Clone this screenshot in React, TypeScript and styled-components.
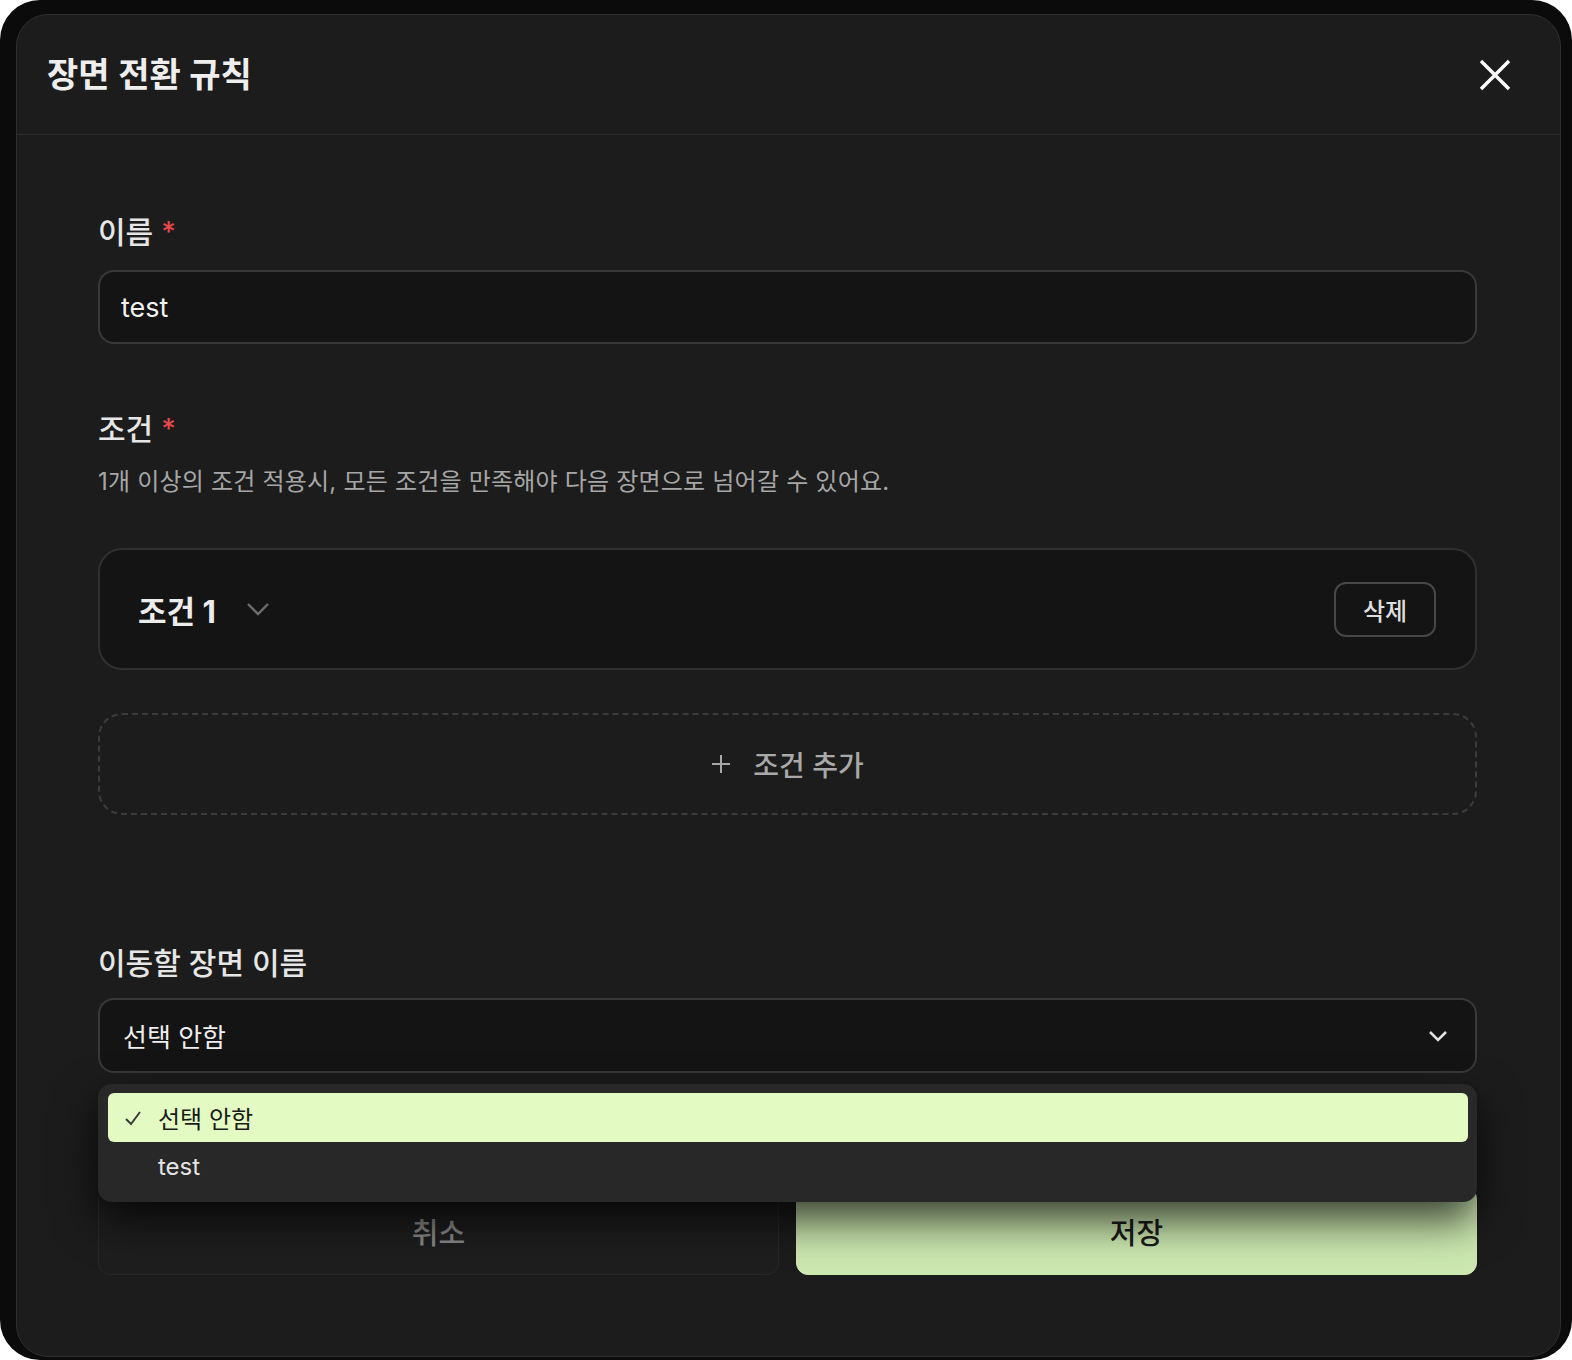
import styled, { createGlobalStyle } from "styled-components";

const GlobalStyle = createGlobalStyle`
  html, body {
    margin: 0;
    padding: 0;
    background: #ffffff;
  }
  body {
    font-family: Inter, "Noto Sans CJK KR", sans-serif;
  }
  * {
    box-sizing: border-box;
  }
`;

// 바깥 검은 프레임
const Frame = styled.div`
  width: 1572px;
  height: 1360px;
  background: #0b0b0b;
  border-radius: 40px;
  padding: 14px 11px 3px 16px;
  display: flex;
`;

const Modal = styled.div`
  flex: 1;
  background: #1c1c1c;
  border: 1px solid #2e2e2e;
  border-radius: 32px;
  display: flex;
  flex-direction: column;
  overflow: hidden;
`;

const Header = styled.div`
  height: 120px;
  flex-shrink: 0;
  border-bottom: 1px solid #2c2c2c;
  display: flex;
  align-items: center;
  justify-content: space-between;
  padding: 0 49px 0 30px;
`;

const Title = styled.h1`
  margin: 0;
  font-size: 34px;
  font-weight: 600;
  color: #eeeeee;
  line-height: 42px;
`;

const CloseButton = styled.button`
  width: 32px;
  height: 32px;
  padding: 0;
  border: none;
  background: transparent;
  cursor: pointer;
  display: flex;
`;

const Body = styled.div`
  flex: 1;
  padding: 78px 83px 0 81px;
  display: flex;
  flex-direction: column;
`;

const Label = styled.div<{ $mt?: number }>`
  margin-top: ${(p) => p.$mt ?? 0}px;
  font-size: 30px;
  font-weight: 500;
  line-height: 38px;
  color: #e6e6e6;
  display: flex;
  align-items: flex-start;
`;

const Required = styled.span`
  margin: 4px 0 0 8px;
  font-size: 28px;
  line-height: 30px;
  color: #e5484d;
`;

const TextInput = styled.input`
  margin-top: 19px;
  height: 74px;
  width: 100%;
  border: 2px solid #393939;
  border-radius: 16px;
  background: #141414;
  padding: 0 21px;
  font-family: inherit;
  font-size: 27px;
  color: #f2f2f2;
  outline: none;
`;

const Description = styled.p`
  margin: 18px 0 0;
  font-size: 24px;
  line-height: 32px;
  letter-spacing: 0.2px;
  color: #a6a6a6;
`;

const ConditionCard = styled.div`
  margin-top: 50px;
  height: 122px;
  border: 2px solid #303030;
  border-radius: 24px;
  background: #141414;
  display: flex;
  align-items: center;
  justify-content: space-between;
  padding: 0 39px 0 38px;
`;

const ConditionTitle = styled.div`
  display: flex;
  align-items: center;
  gap: 30px;
  font-size: 31px;
  font-weight: 700;
  color: #ececec;
`;

const DeleteButton = styled.button`
  width: 102px;
  height: 55px;
  border: 2px solid #474747;
  border-radius: 12px;
  background: transparent;
  font-family: inherit;
  font-size: 24px;
  font-weight: 500;
  color: #dedede;
  cursor: pointer;
`;

const AddButton = styled.button`
  margin-top: 43px;
  height: 102px;
  width: 100%;
  border: 2px dashed #3c3c3c;
  border-radius: 24px;
  background: transparent;
  font-family: inherit;
  font-size: 28px;
  font-weight: 500;
  color: #a9a9a9;
  display: flex;
  align-items: center;
  justify-content: center;
  gap: 22px;
  cursor: pointer;
`;

const SelectWrap = styled.div`
  position: relative;
  margin-top: 16px;
`;

const SelectBox = styled.div`
  height: 75px;
  border: 2px solid #393939;
  border-radius: 16px;
  background: #141414;
  padding: 0 27px 0 23px;
  display: flex;
  align-items: center;
  justify-content: space-between;
  font-size: 26px;
  color: #eeeeee;
`;

const Popup = styled.ul`
  position: absolute;
  top: calc(100% + 11px);
  left: 0;
  right: 0;
  margin: 0;
  padding: 9px 9px 11px 10px;
  list-style: none;
  background: #282828;
  border-radius: 14px;
  box-shadow: 0 18px 44px rgba(0, 0, 0, 0.75);
  z-index: 10;
`;

const Option = styled.li<{ $selected?: boolean }>`
  height: 49px;
  border-radius: 6px;
  display: flex;
  align-items: center;
  gap: 16px;
  padding-left: 16px;
  font-size: 24px;
  background: ${(p) => (p.$selected ? "#e3fbc3" : "transparent")};
  color: ${(p) => (p.$selected ? "#1b1b1b" : "#e4e4e4")};
`;

const CheckSlot = styled.span`
  width: 18px;
  height: 16px;
  display: flex;
`;

const Footer = styled.div`
  margin-top: 114px;
  display: grid;
  grid-template-columns: 1fr 1fr;
  gap: 17px;
`;

const FooterButton = styled.button<{ $primary?: boolean }>`
  height: 88px;
  border-radius: 12px;
  font-family: inherit;
  font-size: 29px;
  font-weight: 500;
  cursor: pointer;
  border: 1px solid ${(p) => (p.$primary ? "#cce8b0" : "#282828")};
  background: ${(p) => (p.$primary ? "#cce8b0" : "#1e1e1e")};
  color: ${(p) => (p.$primary ? "#1c1c1c" : "#8a8a8a")};
`;

function App() {
  return (
    <>
      <GlobalStyle />
      <Frame>
        <Modal>
          <Header>
            <Title>장면 전환 규칙</Title>
            <CloseButton aria-label="닫기">
              <svg width="32" height="32" viewBox="0 0 32 32">
                <path d="M2 2 L30 30 M30 2 L2 30" stroke="#ffffff" strokeWidth="3.4" />
              </svg>
            </CloseButton>
          </Header>

          <Body>
            <Label>
              이름<Required>*</Required>
            </Label>
            <TextInput defaultValue="test" />

            <Label $mt={66}>
              조건<Required>*</Required>
            </Label>
            <Description>
              1개 이상의 조건 적용시, 모든 조건을 만족해야 다음 장면으로 넘어갈 수 있어요.
            </Description>

            <ConditionCard>
              <ConditionTitle>
                조건 1
                <svg width="24" height="14" viewBox="0 0 24 14">
                  <polyline points="2,2 12,12 22,2" fill="none" stroke="#6e6e6e" strokeWidth="2.4" />
                </svg>
              </ConditionTitle>
              <DeleteButton>삭제</DeleteButton>
            </ConditionCard>

            <AddButton>
              <svg width="20" height="20" viewBox="0 0 20 20">
                <path d="M10 1 V19 M1 10 H19" stroke="#a9a9a9" strokeWidth="2" />
              </svg>
              조건 추가
            </AddButton>

            <Label $mt={129}>이동할 장면 이름</Label>
            <SelectWrap>
              <SelectBox>
                선택 안함
                <svg width="20" height="12" viewBox="0 0 20 12">
                  <polyline points="2,2 10,10 18,2" fill="none" stroke="#e2e2e2" strokeWidth="2.5" />
                </svg>
              </SelectBox>
              <Popup>
                <Option $selected>
                  <CheckSlot>
                    <svg width="18" height="16" viewBox="0 0 18 16">
                      <polyline points="2,9 7,14 16,2" fill="none" stroke="#3a3a3a" strokeWidth="2" />
                    </svg>
                  </CheckSlot>
                  선택 안함
                </Option>
                <Option>
                  <CheckSlot />
                  test
                </Option>
              </Popup>
            </SelectWrap>

            <Footer>
              <FooterButton>취소</FooterButton>
              <FooterButton $primary>저장</FooterButton>
            </Footer>
          </Body>
        </Modal>
      </Frame>
    </>
  );
}

export default App;
